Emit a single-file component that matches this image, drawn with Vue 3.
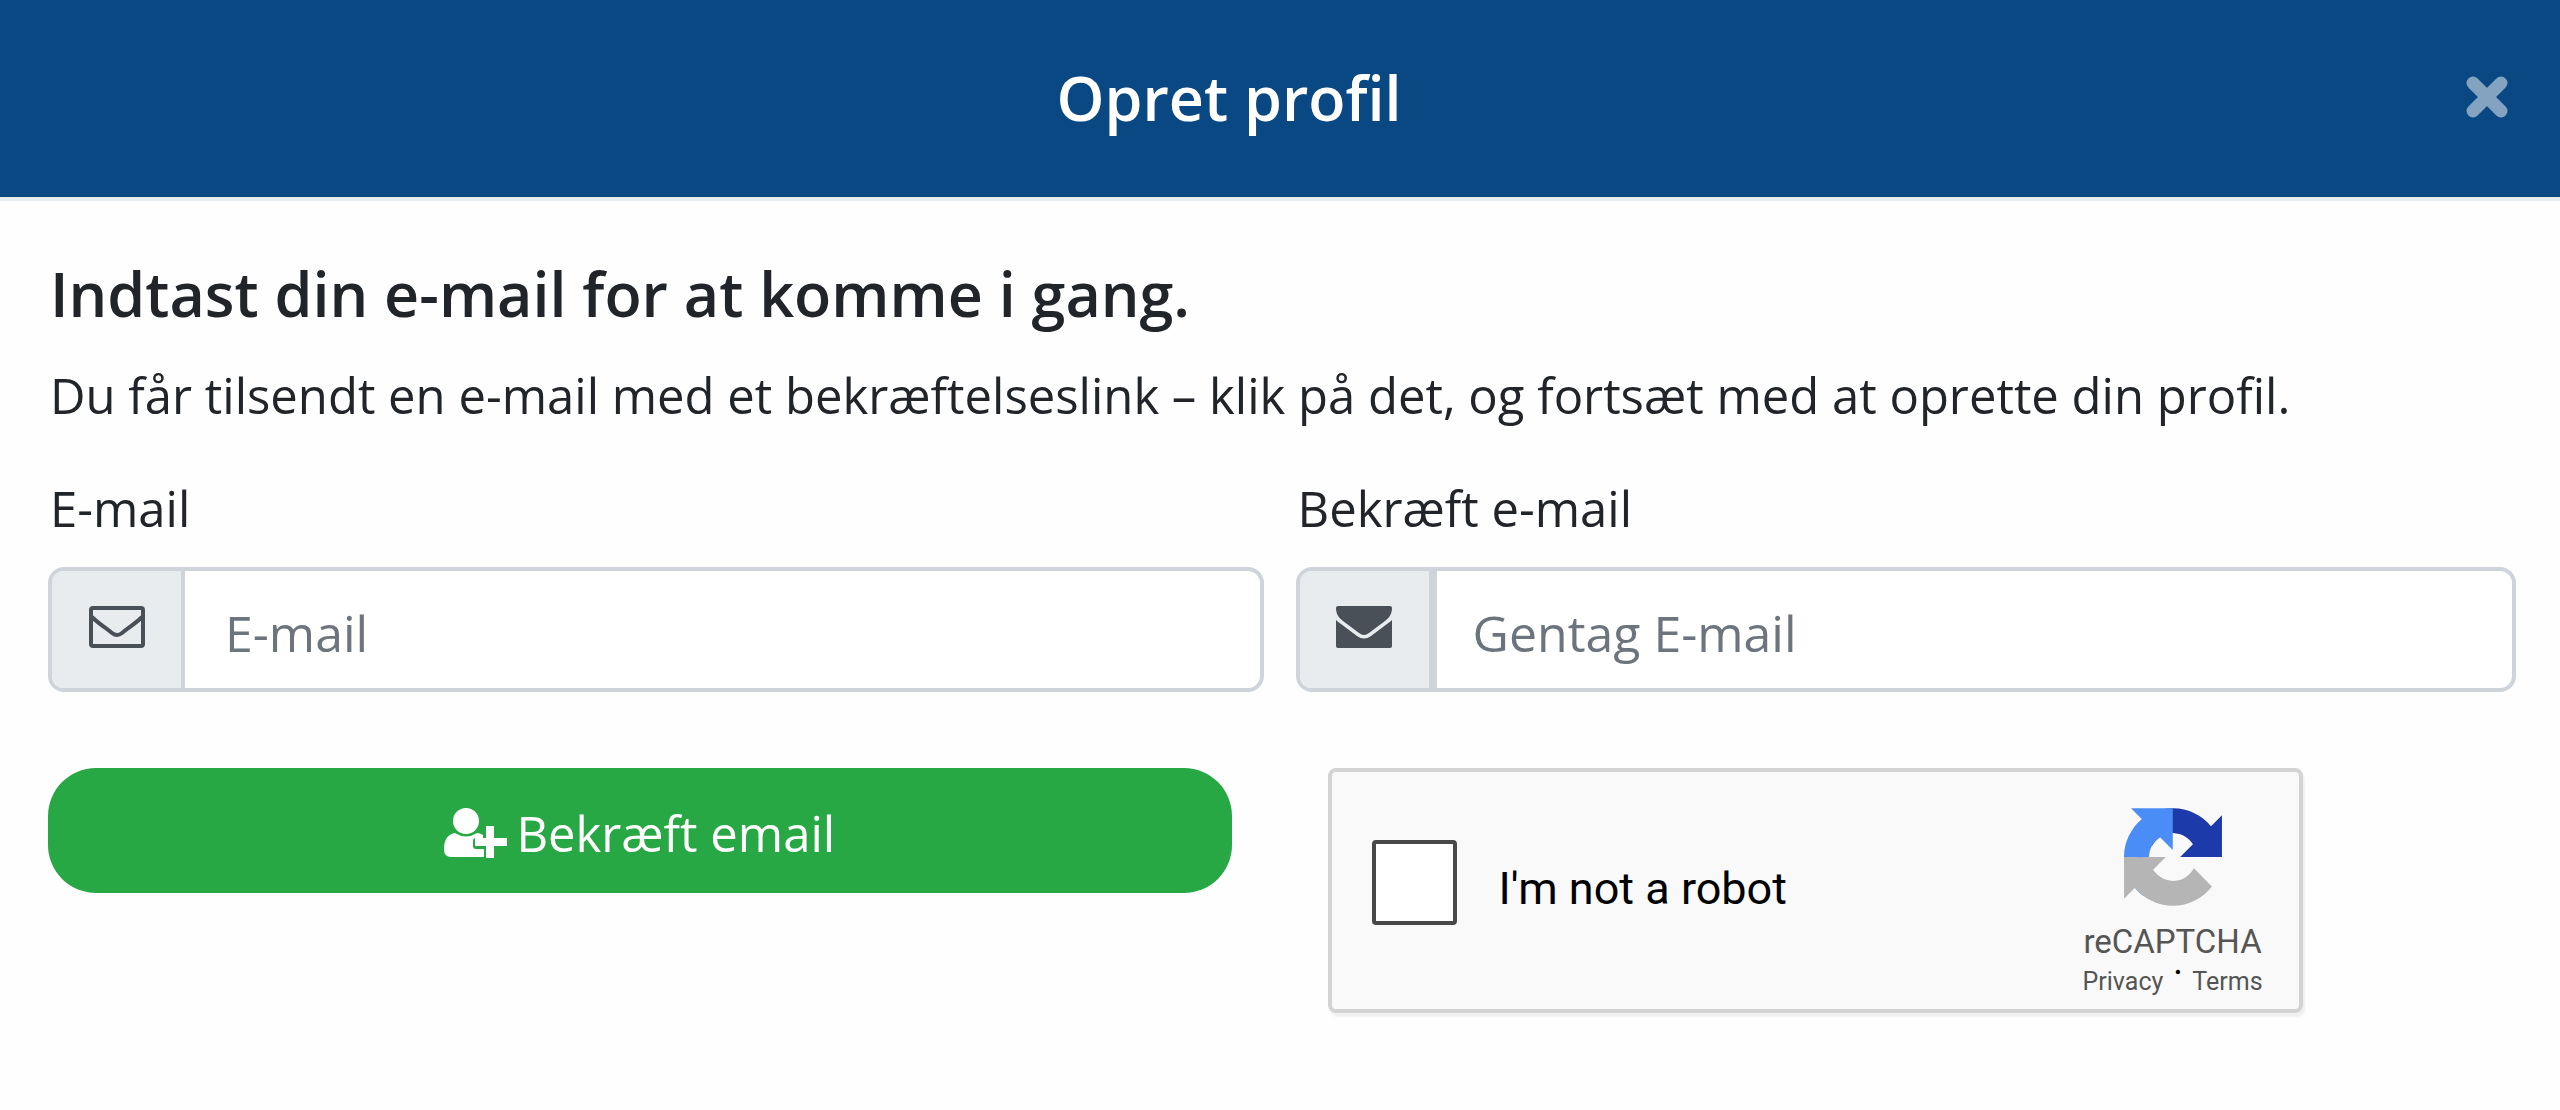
<script setup>
import { ref } from 'vue'

const email = ref('')
const emailRepeat = ref('')
const notRobot = ref(false)
</script>

<template>
  <main class="dialog">
    <header class="dialog-header">
      <h1 class="title">Opret profil</h1>
      <button class="close" type="button" aria-label="Luk">
        <svg width="42" height="42" viewBox="0 0 42 42" aria-hidden="true">
          <path d="M7 7 35 35M35 7 7 35" fill="none" stroke="currentColor" stroke-width="13" stroke-linecap="round" />
        </svg>
      </button>
    </header>

    <form class="dialog-body" @submit.prevent>
      <h2 class="heading">Indtast din e-mail for at komme i gang.</h2>
      <p class="lead">Du får tilsendt en e-mail med et bekræftelseslink – klik på det, og fortsæt med at oprette din profil.</p>

      <div class="columns">
        <div class="field">
          <label for="email">E-mail</label>
          <div class="group">
            <span class="addon">
              <svg width="56" height="42" viewBox="0 0 56 42" aria-hidden="true">
                <path d="M4 2h48a2 2 0 0 1 2 2v34a2 2 0 0 1-2 2H4a2 2 0 0 1-2-2V4a2 2 0 0 1 2-2z" fill="none" stroke="currentColor" stroke-width="4" />
                <path d="M3 11C10 18 17 22 23 27q5 4 10 0C39 22 46 18 53 11" fill="none" stroke="currentColor" stroke-width="4" />
              </svg>
            </span>
            <input id="email" v-model="email" type="email" placeholder="E-mail" />
          </div>
        </div>
        <div class="field">
          <label for="email-repeat">Bekræft e-mail</label>
          <div class="group">
            <span class="addon">
              <svg width="56" height="42" viewBox="0 0 56 42" aria-hidden="true">
                <path d="M2 0h52a2 2 0 0 1 2 2c0 6-3 10-7 13L33 27q-5 4-10 0L7 15C3 12 0 8 0 2a2 2 0 0 1 2-2z" fill="currentColor" />
                <path d="M0 14q2 2 5 4l16 12q7 5 14 0l16-12q3-2 5-4v26a2 2 0 0 1-2 2H2a2 2 0 0 1-2-2z" fill="currentColor" />
              </svg>
            </span>
            <input id="email-repeat" v-model="emailRepeat" class="divided" type="email" placeholder="Gentag E-mail" />
          </div>
        </div>
      </div>

      <div class="columns actions">
        <button class="submit" type="submit">
          <svg width="64" height="50" viewBox="0 0 64 50" aria-hidden="true">
            <ellipse cx="22" cy="13" rx="13" ry="13" fill="currentColor" />
            <path d="M11 25q11 7 22 0 3 0 6 2v3h-7a3 3 0 0 0-3 3v5a3 3 0 0 0 3 3h8v8H7q-7 0-7-8 0-14 11-16z" fill="currentColor" />
            <path d="M42 18h8v12h13v8H50v12h-8V38H31v-8h11z" fill="currentColor" />
          </svg>
          <span>Bekræft email</span>
        </button>

        <div class="captcha">
          <input id="robot" v-model="notRobot" type="checkbox" />
          <label for="robot">I'm not a robot</label>
          <div class="brand">
            <svg width="98" height="98" viewBox="0 0 64 64" aria-hidden="true">
              <path fill="#1c3aa9" d="M64 31.955l-.033-1.37V4.687l-7.16 7.16C50.948 4.674 42.033.093 32.05.093c-10.4 0-19.622 4.96-25.458 12.64l11.736 11.86a15.55 15.55 0 0 1 4.754-5.334c2.05-1.6 4.952-2.906 8.968-2.906.485 0 .86.057 1.135.163 4.976.393 9.288 3.14 11.828 7.124l-8.307 8.307L64 31.953" />
              <path fill="#4a8df6" d="M31.862.094l-1.37.033H4.594l7.16 7.16C4.58 13.147 0 22.06 0 32.046c0 10.4 4.96 19.622 12.64 25.458L24.5 45.768a15.55 15.55 0 0 1-5.334-4.754c-1.6-2.05-2.906-4.952-2.906-8.968 0-.485.057-.86.163-1.135.393-4.976 3.14-9.288 7.124-11.828l8.307 8.307L31.86.095" />
              <path fill="#b5b5b5" d="M.001 32.045l.033 1.37v25.898l7.16-7.16c5.86 7.173 14.774 11.754 24.76 11.754 10.4 0 19.622-4.96 25.458-12.64l-11.736-11.86a15.55 15.55 0 0 1-4.754 5.334c-2.05 1.6-4.952 2.906-8.968 2.906-.485 0-.86-.057-1.135-.163-4.976-.393-9.288-3.14-11.828-7.124l8.307-8.307c-10.522.04-22.4.066-27.295-.005" />
            </svg>
            <span class="brand-name">reCAPTCHA</span>
            <span class="legal"><a href="#privacy">Privacy</a><span class="dot">˙</span><a href="#terms">Terms</a></span>
          </div>
        </div>
      </div>
    </form>
  </main>
</template>

<style>
body {
  margin: 0;
  background: #fefefe;
}
</style>

<style scoped>
.dialog {
  font-family: "Open Sans", "Noto Sans", sans-serif;
  color: #212529;
}

.dialog-header {
  display: flex;
  align-items: flex-start;
  padding: 64px 52px 65px;
  background: #094883;
  border-bottom: 4px solid #e9ecef;
}

.title {
  flex: 1;
  margin: 0;
  color: #fff;
  font-size: 61px;
  font-weight: 600;
  line-height: 68px;
  text-align: center;
}

.close {
  display: flex;
  justify-content: flex-end;
  width: 102px;
  padding: 12px 0;
  border: 0;
  background: none;
  color: #84a3c1;
}

.dialog-body {
  padding: 56px 44px 96px 48px;
}

.heading {
  margin: 0 0 28px;
  padding-left: 2px;
  font-size: 61px;
  font-weight: 600;
  line-height: 74px;
}

.lead {
  margin: 0 0 41px;
  padding-left: 2px;
  font-size: 49px;
  line-height: 72px;
}

.columns {
  display: grid;
  grid-template-columns: 249fr 250fr;
  column-gap: 32px;
}

.field label {
  display: block;
  margin-bottom: 23px;
  padding-left: 2px;
  font-size: 49px;
  line-height: 72px;
}

.group {
  display: flex;
  box-sizing: border-box;
  height: 125px;
  border: 4px solid #ced4da;
  border-radius: 16px;
  background: #fff;
  overflow: hidden;
}

.addon {
  display: flex;
  flex: none;
  justify-content: center;
  align-items: center;
  box-sizing: border-box;
  width: 133px;
  padding-bottom: 6px;
  border-right: 4px solid #ced4da;
  background: #e9ecef;
  color: #495057;
}

.group input {
  flex: 1;
  min-width: 0;
  padding: 6px 36px 0 40px;
  border: 0;
  background: none;
  color: #495057;
  font-family: inherit;
  font-size: 50px;
  outline: none;
}

.group .divided {
  padding-left: 36px;
  border-left: 4px solid #ced4da;
}

.group input::placeholder {
  color: #6c757d;
  opacity: 1;
}

.actions {
  align-items: start;
  margin-top: 76px;
}

.submit {
  display: flex;
  justify-content: center;
  align-items: center;
  gap: 8px;
  height: 125px;
  margin-right: 32px;
  padding: 4px 0 0;
  border: 0;
  border-radius: 48px;
  background: #28a745;
  color: #fff;
  font-family: inherit;
  font-size: 49px;
}

.captcha {
  display: flex;
  align-items: flex-start;
  box-sizing: border-box;
  width: 975px;
  max-width: 100%;
  height: 245px;
  margin-left: 32px;
  padding: 36px 36px 0 40px;
  border: 4px solid #d3d3d3;
  border-radius: 8px;
  background: #f9f9f9;
  box-shadow: 2px 4px 2px #f1f1f1;
  font-family: Roboto, sans-serif;
}

.captcha input {
  appearance: none;
  flex: none;
  box-sizing: border-box;
  width: 85px;
  height: 85px;
  margin: 32px 42px 0 0;
  border: 4px solid #484848;
  border-radius: 4px;
  background: #fff;
}

.captcha input:checked {
  background: #4a8df6;
}

.captcha label {
  flex: 1;
  margin-top: 45px;
  color: #000;
  font-size: 45px;
  line-height: 72px;
}

.brand {
  display: flex;
  flex-direction: column;
  align-items: center;
  width: 180px;
  color: #555;
}

.brand-name {
  margin-top: 16px;
  font-size: 33px;
  line-height: 40px;
}

.legal {
  display: flex;
  justify-content: space-between;
  align-self: stretch;
  margin-top: 6px;
  font-size: 25px;
  line-height: 28px;
}

.legal a {
  color: inherit;
  text-decoration: none;
}

.dot {
  color: #000;
  font-size: 40px;
  line-height: 36px;
}
</style>
